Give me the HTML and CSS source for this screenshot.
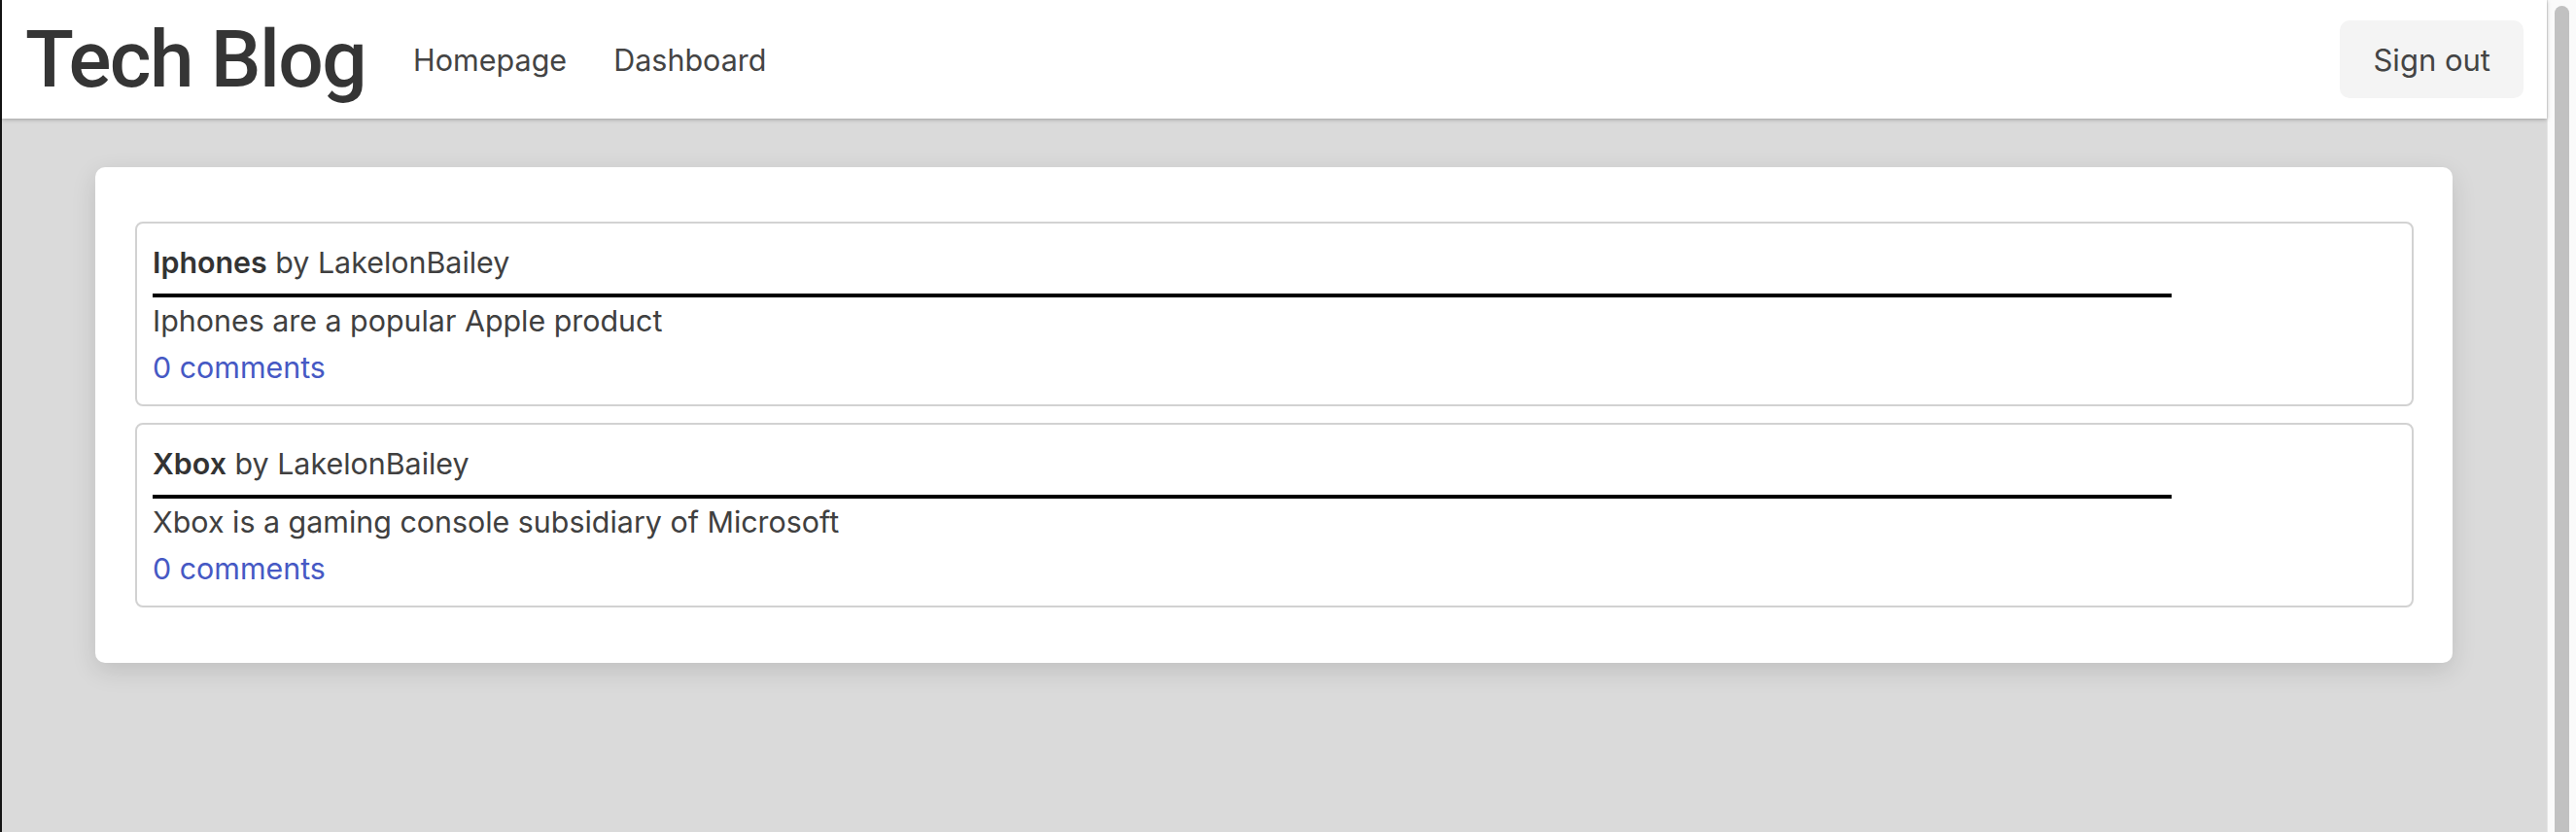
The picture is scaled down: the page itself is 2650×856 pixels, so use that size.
FILE: index.html
```html
<!DOCTYPE html>
<html lang="en">
<head>
<meta charset="utf-8">
<title>Tech Blog</title>
<link rel="stylesheet" href="styles.css">
</head>
<body>
<div class="edge"></div>
<div class="page">
  <header class="topbar">
    <div class="brand">Tech Blog</div>
    <nav class="nav">
      <a class="nav-link" href="#">Homepage</a>
      <a class="nav-link" href="#">Dashboard</a>
    </nav>
    <button class="signout" type="button">Sign out</button>
  </header>
  <main class="content">
    <section class="panel">
      <article class="post">
        <div class="post-head"><strong class="post-title">Iphones</strong> by LakelonBailey</div>
        <hr class="post-rule">
        <p class="post-body">Iphones are a popular Apple product</p>
        <a class="post-link" href="#">0 comments</a>
      </article>
      <article class="post">
        <div class="post-head"><strong class="post-title">Xbox</strong> by LakelonBailey</div>
        <hr class="post-rule">
        <p class="post-body">Xbox is a gaming console subsidiary of Microsoft</p>
        <a class="post-link" href="#">0 comments</a>
      </article>
    </section>
  </main>
</div>
<div class="scrollbar"><div class="thumb"></div></div>
</body>
</html>
```
FILE: styles.css
```css
*, *::before, *::after {
  box-sizing: border-box;
}
html, body {
  margin: 0;
  padding: 0;
}
body {
  display: flex;
  height: 856px;
  overflow: hidden;
  background: #dadada;
  font-family: Inter, "Noto Sans", sans-serif;
  color: #404040;
}
.edge {
  width: 2px;
  flex: none;
  background: #151515;
}
.page {
  flex: 1;
  display: flex;
  flex-direction: column;
  background: #dadada;
  min-width: 0;
}
.topbar {
  height: 122px;
  flex: none;
  display: flex;
  align-items: center;
  padding: 0 24px 0 24px;
  background: #ffffff;
  box-shadow: 0 1px 4px rgba(0, 0, 0, 0.28);
  position: relative;
  z-index: 1;
}
.brand {
  font-family: Roboto, "Liberation Sans", sans-serif;
  font-weight: 500;
  font-size: 82px;
  letter-spacing: -1.6px;
  color: #353535;
  line-height: 1;
  margin-right: 49px;
}
.nav {
  display: flex;
  gap: 48px;
  flex: 1;
}
.nav-link {
  font-size: 30.5px;
  color: #444444;
  text-decoration: none;
}
.signout {
  font-family: Inter, "Noto Sans", sans-serif;
  font-size: 31px;
  color: #444444;
  background: #f4f4f4;
  border: none;
  border-radius: 10px;
  height: 80px;
  padding: 0 34px;
}
.content {
  padding: 50px 97px 0 96px;
}
.panel {
  background: #ffffff;
  border-radius: 10px;
  box-shadow: 0 8px 26px rgba(0, 0, 0, 0.12);
  padding: 56px 40px 57px 41px;
  display: flex;
  flex-direction: column;
  gap: 17px;
}
.post {
  border: 2px solid #d2d2d2;
  border-radius: 8px;
  padding: 16px 16px 14px 16px;
  font-size: 30.4px;
  line-height: 48px;
}
.post-head {
  color: #404040;
}
.post-title {
  font-weight: 600;
  color: #333333;
}
.post-rule {
  width: 90%;
  margin: 8px 0 0 0;
  border: none;
  border-top: 4px solid #000000;
  height: 0;
}
.post-body {
  margin: 0;
  color: #404040;
}
.post-link {
  color: #4659c4;
  text-decoration: none;
}
.scrollbar {
  width: 30px;
  flex: none;
  display: flex;
  flex-direction: column;
  background: #fafafa;
  border-left: 1px solid #e6e6e6;
  padding: 6px 7px 0 7px;
}
.thumb {
  flex: 1;
  background: #c1c1c1;
  border-radius: 8px 8px 0 0;
}
```
